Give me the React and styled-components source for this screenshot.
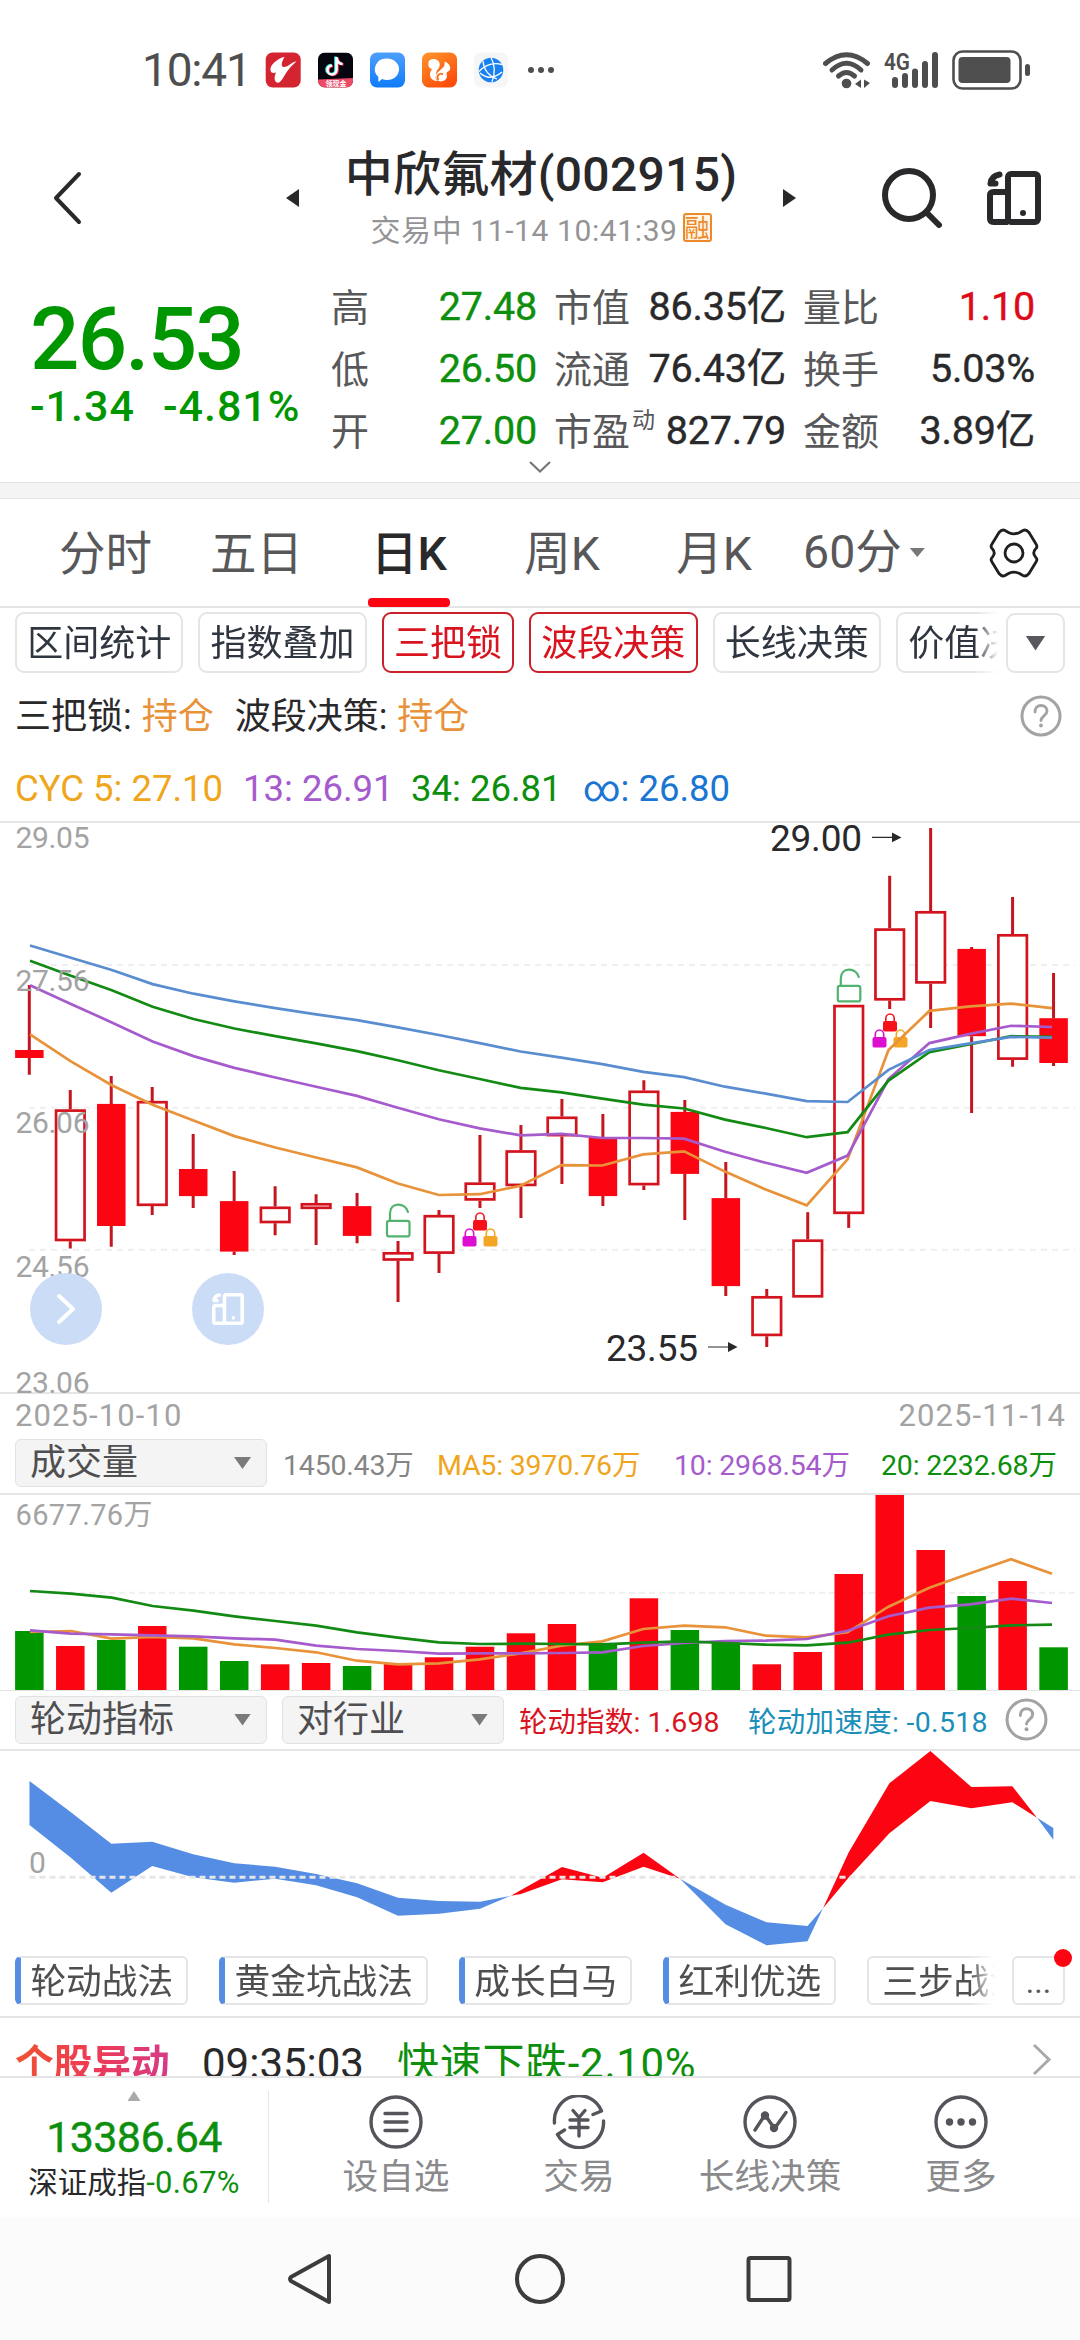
import React from 'react';
import styled, { createGlobalStyle, css } from 'styled-components';

const colors = {
  red: '#fa0511',
  wick: '#c4161f',
  green: '#009600',
  greenText: '#0d8f0d',
  orange: '#e8923a',
  gold: '#efa51c',
  purple: '#a65bcd',
  lineGreen: '#138a13',
  blue: '#5a8dd0',
  area: '#548de3',
  ink: '#29292b',
  label: '#58585a',
  muted: '#a3a3a3',
  border: '#e5e5e5',
};

// ---- chart data -------------------------------------------------------

// [high, body top, body bottom, low, filled]
const candles = [
  [984.9, 1050, 1058, 1074.8, 1],
  [1090.1, 1109.3, 1241.3, 1248.6, 0],
  [1076, 1103.9, 1226, 1246.7, 1],
  [1087, 1100.9, 1206.1, 1214.9, 0],
  [1134.1, 1169, 1196.1, 1208, 1],
  [1170.9, 1201.1, 1251.6, 1255, 1],
  [1186.2, 1206.5, 1223.3, 1235.2, 0],
  [1194.2, 1203, 1209.1, 1245.1, 0],
  [1193.1, 1206.1, 1235.9, 1243.2, 1],
  [1240.9, 1252, 1260.8, 1302.1, 0],
  [1209.9, 1214.9, 1253.9, 1273, 0],
  [1134.9, 1182.4, 1200.7, 1208, 0],
  [1125, 1150.2, 1186.2, 1218, 0],
  [1098.9, 1116.5, 1136.4, 1183.9, 0],
  [1113.9, 1137.6, 1196.1, 1206.1, 1],
  [1080.2, 1090.5, 1185.4, 1190, 0],
  [1100, 1111.9, 1173.9, 1219.9, 1],
  [1162.1, 1198.1, 1286.1, 1296, 1],
  [1289.1, 1296, 1336.2, 1346.9, 0],
  [1212.2, 1239.4, 1297.6, 1297.6, 0],
  [1004.8, 1004.8, 1214.1, 1227.9, 0],
  [875.8, 928.3, 1000.6, 1009, 0],
  [828, 911, 983.7, 1028.1, 0],
  [947, 948.9, 1036.2, 1113.1, 1],
  [896.9, 934, 1059.9, 1066.8, 0],
  [973, 1018.2, 1063, 1066, 1],
];

const cycLines = [
  {
    color: colors.orange,
    values: [1034.3, 1061.4, 1085.2, 1104.7, 1120.4, 1136.1, 1147.5, 1157.5, 1167.4, 1183.5, 1195, 1194.2, 1185.8, 1165.1, 1165.5, 1154.4, 1151.4, 1171.6, 1189.6, 1205.3, 1159.4, 1050, 1010.9, 1006.3, 1003.6, 1008.2],
  },
  {
    color: colors.purple,
    values: [985.3, 1004, 1022.4, 1041.5, 1056.1, 1067.9, 1077.5, 1086.7, 1095.9, 1107.7, 1119.2, 1128.4, 1135.3, 1133.8, 1138, 1138, 1138.7, 1151.8, 1162.8, 1172.8, 1155.6, 1079, 1043.1, 1033.9, 1025.8, 1027],
  },
  {
    color: colors.lineGreen,
    values: [960.8, 975.7, 990.3, 1006.7, 1019, 1028.5, 1036.2, 1043.4, 1051.1, 1060.3, 1070.2, 1079, 1087.8, 1092.4, 1098.6, 1104.7, 1108.5, 1119.6, 1128, 1137.2, 1132.2, 1080.6, 1052.2, 1044.2, 1036.2, 1036.9],
  },
  {
    color: colors.blue,
    values: [945.5, 957.7, 970, 984.1, 993.7, 1001.4, 1008.2, 1014.4, 1020.1, 1027.4, 1035, 1043.1, 1051.5, 1057.6, 1064.1, 1071.8, 1077.1, 1086.7, 1093.6, 1101.2, 1102, 1069.9, 1050, 1043.4, 1036.9, 1037.7],
  },
];

// positive = up day (red), negative = down day (green)
const volumes = [-59, 44, -50, 64, -43.3, -29, 25.7, 27, -24, 26.7, 32.7, 43.3, 56.7, 66, -45.7, 91.7, -60, -47.7, 25.7, 38, 116, 195, 140, -94, 109, -42.7];

const volumeLines = [
  {
    color: colors.orange,
    values: [1632, 1631, 1638.7, 1637, 1638.3, 1644.3, 1648, 1652.3, 1660.7, 1664.3, 1663.3, 1659.3, 1653.3, 1645.7, 1641.3, 1629, 1625.7, 1627.3, 1635.7, 1637.3, 1632.3, 1606.7, 1587.7, 1573.3, 1559.3, 1573.7],
  },
  {
    color: colors.purple,
    values: [1630.3, 1633.7, 1634.3, 1635.3, 1636.3, 1638.3, 1639.7, 1645.7, 1649, 1651, 1653.7, 1653.3, 1653.3, 1653, 1652.3, 1646, 1643, 1641, 1640.7, 1639, 1630.7, 1616.3, 1607.7, 1604.3, 1598.7, 1603],
  },
  {
    color: colors.lineGreen,
    values: [1591, 1593.7, 1597.7, 1606, 1610.7, 1616.3, 1621, 1625.7, 1632.3, 1637.7, 1642.3, 1644, 1643.7, 1644, 1644.3, 1642.7, 1641.3, 1643, 1644.7, 1645.3, 1642.7, 1634.7, 1630, 1628, 1625.3, 1624.7],
  },
];

const rotationAreas = [
  { color: colors.area, points: '29.5,1781 70.3,1811.7 111.3,1843.7 152.2,1841.7 193.2,1854.3 234.2,1863.3 275.1,1866.7 316.1,1874 357.1,1883.3 398,1897.7 439,1901 480,1901.7 511,1895.7 480,1908.7 439,1913.7 398,1915.7 357.1,1897.3 316.1,1885.3 275.1,1878.7 234.2,1882.7 193.2,1877.3 152.2,1866 111.3,1892.7 70.3,1857.3 29.5,1825' },
  { color: colors.red, points: '511,1895.7 521,1890 562,1867 602.7,1877.7 643.6,1852.7 680,1878.7 643.6,1866.7 602.7,1882.3 562,1879.3 521,1894' },
  { color: colors.area, points: '680,1878.7 725.5,1904.7 766.5,1922.3 807.5,1926 823,1908.3 807.5,1941.3 766.5,1945.3 725.5,1924.3' },
  { color: colors.red, points: '823,1908.3 848.5,1852.7 889.4,1783.3 930.4,1751 971.4,1787 1012.3,1786.3 1037,1817.7 1012.3,1802.3 971.4,1808.3 930.4,1801 889.4,1833.3 848.5,1877.7' },
  { color: colors.area, points: '1037,1817.7 1053.3,1828 1053.3,1839.7' },
];

const candleX = (i) => 29.3 + i * 40.97;
const toPoints = (values) => values.map((y, i) => `${(30 + i * 40.88).toFixed(1)},${y}`).join(' ');

// ---- icons ------------------------------------------------------------

const SplitScreenIcon = ({ size, color }) => (
  <svg width={size} height={size} viewBox="0 0 54 54" fill="none" stroke={color} strokeWidth="6">
    <rect x="21" y="3" width="30" height="48" rx="3" />
    <path d="M21 21H6.500Q3 21 3 24.500V47.500Q3 51 6.500 51H21" />
    <circle cx="36" cy="42" r="3" fill={color} stroke="none" />
    <path d="M12.500 3.500C7 4.500 4 8 3.500 12.500H8.500" strokeLinecap="round" strokeLinejoin="round" />
  </svg>
);

const HelpIcon = ({ size = 42 }) => (
  <svg width={size} height={size} viewBox="0 0 42 42">
    <circle cx="21" cy="21" r="19" fill="none" stroke="#a3a3a3" strokeWidth="3" />
    <path d="M15 17c0-4 2.500-6.500 6-6.500s6 2.300 6 5.600c0 4.500-6 5-6 9.400" fill="none" stroke="#a3a3a3" strokeWidth="2.900" strokeLinecap="round" />
    <circle cx="21" cy="30.500" r="1.900" fill="#a3a3a3" />
  </svg>
);

const OpenLock = ({ x, y }) => (
  <g transform={`translate(${x} ${y})`} fill="none" stroke="#52b36e" strokeWidth="2.200">
    <rect x="1" y="17.500" width="22.500" height="15.500" rx="2" />
    <path d="M4 17.500V10C4 -1.500 19.500 -1.500 22 8.500" strokeLinecap="round" />
  </g>
);

const SmallLock = ({ x, y, color }) => (
  <g transform={`translate(${x} ${y})`}>
    <path d="M2.800 9V5.500a4.200 4.500 0 0 1 8.400 0V9" fill="none" stroke={color} strokeWidth="1.600" />
    <rect y="8" width="14" height="10.500" rx="2" fill={color} />
  </g>
);

const LockGroup = ({ x, y }) => (
  <g transform={`translate(${x} ${y})`}>
    <SmallLock x={10.5} y={0} color="#f5121b" />
    <SmallLock x={0} y={16} color="#dc0fd0" />
    <SmallLock x={21} y={16} color="#f5a524" />
  </g>
);

const StatusIcons = () => (
  <svg width="208" height="44" viewBox="823 47 208 44">
    <g fill="none" stroke="#4e4e4e" strokeWidth="5" strokeLinecap="round">
      <path d="M825.500 62.500Q846.500 45 867.500 62.500" />
      <path d="M832 69Q846.500 55.500 861 69" />
      <path d="M838.500 75Q846.500 68 854.500 75" />
    </g>
    <circle cx="846.500" cy="82.500" r="4.800" fill="#4e4e4e" />
    <path d="M861 78.500V87L855 83zM864 78.500V87L870 82z" fill="#4e4e4e" />
    <text x="884" y="69" fontSize="24" fontWeight="600" fill="#4e4e4e" textLength="26" lengthAdjust="spacingAndGlyphs">4G</text>
    <g stroke="#4e4e4e" strokeWidth="6" strokeLinecap="round">
      <path d="M895 79V84M905 75V84M915 70.500V84M925 63V84M935 54V84" />
    </g>
    <rect x="953.500" y="50.500" width="67" height="37" rx="9" fill="none" stroke="#4e4e4e" strokeWidth="2.600" />
    <rect x="958.500" y="56" width="52" height="26" rx="4" fill="#4e4e4e" />
    <rect x="1025" y="63" width="5" height="12" rx="2.500" fill="#4e4e4e" />
  </svg>
);

const NotificationIcons = () => (
  <svg width="290" height="38" viewBox="265 51 290 38">
    <defs>
      <linearGradient id="msg" x1="0" y1="0" x2="0" y2="1">
        <stop offset="0" stopColor="#4da0fb" />
        <stop offset="1" stopColor="#0f7bfa" />
      </linearGradient>
      <linearGradient id="uc" x1="0" y1="0" x2="0.600" y2="1">
        <stop offset="0" stopColor="#ff962b" />
        <stop offset="1" stopColor="#fb4e0b" />
      </linearGradient>
      <clipPath id="tik">
        <rect x="318" y="52.500" width="35" height="35" rx="7" />
      </clipPath>
    </defs>
    <rect x="265.700" y="52.500" width="35" height="35" rx="7" fill="#d4242f" />
    <path d="M284.500 56.700C276 59 269.500 66 270.500 70C271 74 274.500 73 276 72.500C273.500 78 274.500 82.500 278 82.800C283 82.500 283.500 72 296.500 61.500C291 62 288 67.500 283.500 67C280 66 282.500 60.500 284.500 56.700z" fill="#fff" />
    <g clipPath="url(#tik)">
      <rect x="318" y="52.500" width="35" height="35" fill="#05050f" />
      <g fill="none" strokeWidth="2.600">
        <path d="M335.500 56.500V69.500a4.500 4.500 0 1 1-4.500-4.500M335.500 57.500q1 5.500 6 6" stroke="#25f4ee" />
        <path d="M337.500 57.500V70.500a4.500 4.500 0 1 1-4.500-4.500M337.500 58.500q1 5.500 6 6" stroke="#fe2c55" />
        <path d="M336.500 57V70a4.500 4.500 0 1 1-4.500-4.500M336.500 58q1 5.500 6 6" stroke="#fff" />
      </g>
      <path d="M318 79.500L353 78V88H318z" fill="#ed4a67" />
      <text x="325.500" y="86.300" fontSize="7" fontWeight="700" fill="#fff">领现金</text>
    </g>
    <rect x="370" y="52.500" width="35" height="35" rx="7" fill="url(#msg)" />
    <path d="M387 58.500a12 10.800 0 1 1-5 20.600L378.500 82L378.300 77A11.500 10.800 0 0 1 387 58.500z" fill="#fff" />
    <rect x="422" y="52.500" width="35" height="35" rx="7" fill="url(#uc)" />
    <path d="M428.500 63.500C428 60 431.500 58.500 434.500 59C440 60 441 65 438.500 68.500C436 71 436.500 73 436 76C435 78.500 436.500 80.500 438 81C431 81.500 427 75 432.500 68.500C431.500 69.500 427.500 67.500 428.500 63.500z" fill="#fff" />
    <path d="M436 76C437 72 441 69.500 443.500 67C445 65.500 444.500 63 444.500 61.500C449.500 63 451.500 68 449.500 70.500C447 72 446.500 72.500 446.500 74C448 77.500 445.500 81.500 440.500 81.500C437 81 435.500 79 436 76z" fill="#fff" />
    <path d="M438.500 80C435.500 76 440 72 443 74.500" fill="none" stroke="#fd6f1a" strokeWidth="1.800" />
    <rect x="474" y="52.500" width="34" height="35" rx="7" fill="#f6f6f7" />
    <circle cx="491" cy="70" r="12.300" fill="#1a82f0" />
    <path d="M479 71.500Q489 61 502 64.500M480 73Q490 82 502 72M491 57.500Q497 68 492 82" fill="none" stroke="#fff" strokeWidth="1.300" />
    <path d="M483 61Q484 74 497 79" fill="none" stroke="#fff" strokeWidth="1.300" />
    <g fill="#4e4e4e">
      <circle cx="531" cy="70" r="3" />
      <circle cx="541" cy="70" r="3" />
      <circle cx="551" cy="70" r="3" />
    </g>
  </svg>
);

// ---- charts -----------------------------------------------------------

const PriceChart = () => (
  <ChartSvg height="571" viewBox="0 823 1080 571">
    <path d="M29 965H1075M29 1107.700H1075M29 1249.700H1075" stroke="#efefef" strokeWidth="2" strokeDasharray="6 5" />
    {candles.map(([high, top, bottom, low, filled], i) => {
      const x = candleX(i);
      return (
        <g key={i}>
          <path d={`M${x} ${high}V${top}M${x} ${bottom}V${low}`} stroke={colors.wick} strokeWidth="3" />
          {filled ? (
            <rect x={x - 14.2} y={top} width="28.500" height={bottom - top} fill={colors.red} />
          ) : (
            <rect x={x - 14.2} y={top + 1.3} width="28.500" height={bottom - top - 2.6} fill="#fff" stroke="#d3141e" strokeWidth="2.700" />
          )}
        </g>
      );
    })}
    <LockGroup x={462.5} y={1212} />
    <LockGroup x={872.5} y={1013} />
    <OpenLock x={386} y={1203.4} />
    <OpenLock x={836.8} y={968.4} />
    {cycLines.map((line) => (
      <polyline key={line.color} points={toPoints(line.values)} fill="none" stroke={line.color} strokeWidth="2.700" />
    ))}
    <g fontSize="30" fill={colors.muted}>
      <text x="15.500" y="848" textLength="74">29.05</text>
      <text x="15.500" y="991" textLength="74">27.56</text>
      <text x="15.500" y="1133" textLength="74">26.06</text>
      <text x="15.500" y="1276.500" textLength="74">24.56</text>
      <text x="15.500" y="1393" textLength="74">23.06</text>
    </g>
    <g fontSize="37" fill={colors.ink}>
      <text x="770" y="851" textLength="92">29.00</text>
      <text x="606" y="1361" textLength="92">23.55</text>
    </g>
    <g stroke={colors.ink} fill={colors.ink}>
      <path d="M872 837.400H894M708 1347H730" strokeWidth="1.200" />
      <path d="M892 832.500L901.500 837.400L892 842.300zM728 1342L737.500 1347L728 1352z" stroke="none" />
    </g>
  </ChartSvg>
);

const VolumeChart = () => (
  <ChartSvg height="195" viewBox="0 1495 1080 195">
    <path d="M29 1592.700H1075" stroke="#efefef" strokeWidth="2" strokeDasharray="6 4" />
    {volumes.map((v, i) => (
      <rect key={i} x={candleX(i) - 14.2} y={1690 - Math.abs(v)} width="28.500" height={Math.abs(v)} fill={v > 0 ? colors.red : colors.green} />
    ))}
    {volumeLines.map((line) => (
      <polyline key={line.color} points={toPoints(line.values)} fill="none" stroke={line.color} strokeWidth="2.700" />
    ))}
    <text x="15.500" y="1524.500" fontSize="29" fill={colors.muted} textLength="137">6677.76万</text>
  </ChartSvg>
);

const RotationChart = () => (
  <ChartSvg height="195" viewBox="0 1751 1080 195">
    {rotationAreas.map((area) => (
      <polygon key={area.points} points={area.points} fill={area.color} />
    ))}
    <path d="M29.500 1877.300H1080" stroke="#e6e6e6" strokeWidth="3" strokeDasharray="6 4" />
    <text x="29" y="1873" fontSize="30" fill={colors.muted}>0</text>
  </ChartSvg>
);

// ---- page -------------------------------------------------------------

const quoteRows = [
  ['高', '27.48', '市值', '86.35亿', '量比', '1.10'],
  ['低', '26.50', '流通', '76.43亿', '换手', '5.03%'],
  ['开', '27.00', '市盈', '827.79', '金额', '3.89亿'],
];

const chips = [
  { text: '区间统计' },
  { text: '指数叠加' },
  { text: '三把锁', active: true },
  { text: '波段决策', active: true },
  { text: '长线决策' },
  { text: '价值决策' },
];

const strategies = ['轮动战法', '黄金坑战法', '成长白马', '红利优选'];

const App = () => {
  return (
    <Page>
      <GlobalStyle />

      <StatusBar>
        <Clock>10:41</Clock>
        <NotificationIcons />
        <Spacer />
        <StatusIcons />
      </StatusBar>

      <Header>
        <svg width="30" height="54" viewBox="0 0 30 54" fill="none" stroke={colors.ink} strokeWidth="4" strokeLinecap="round" strokeLinejoin="round">
          <path d="M27 3L4 27L27 51" />
        </svg>
        <Switcher>
          <Caret $dir="left" />
          <TitleBlock>
            <Title>中欣氟材(002915)</Title>
            <Subtitle>
              交易中 11-14 10:41:39<MarginBadge>融</MarginBadge>
            </Subtitle>
          </TitleBlock>
          <Caret $dir="right" />
        </Switcher>
        <HeaderTools>
          <svg width="62" height="62" viewBox="0 0 62 62" fill="none" stroke={colors.ink} strokeWidth="6" strokeLinecap="round">
            <circle cx="28" cy="28" r="24" />
            <path d="M45.500 45.500L58 58" />
          </svg>
          <SplitScreenIcon size={54} color={colors.ink} />
        </HeaderTools>
      </Header>

      <Quote>
        <PriceBlock>
          <Price>26.53</Price>
          <Change>
            <span>-1.34</span>
            <span>-4.81%</span>
          </Change>
        </PriceBlock>
        <Metrics>
          {quoteRows.map((row, i) => (
            <React.Fragment key={row[0]}>
              <Metric>
                <MetricLabel>{row[0]}</MetricLabel>
                <MetricValue $color={colors.greenText}>{row[1]}</MetricValue>
              </Metric>
              <Metric>
                <MetricLabel>
                  {row[2]}
                  {i === 2 && <Sup>动</Sup>}
                </MetricLabel>
                <MetricValue>{row[3]}</MetricValue>
              </Metric>
              <Metric>
                <MetricLabel>{row[4]}</MetricLabel>
                <MetricValue $color={i === 0 ? '#de0a17' : undefined}>{row[5]}</MetricValue>
              </Metric>
            </React.Fragment>
          ))}
        </Metrics>
      </Quote>
      <ExpandRow>
        <svg width="24" height="14" viewBox="0 0 24 14" fill="none" stroke="#777" strokeWidth="2.200">
          <path d="M2 2L12 11.500L22 2" />
        </svg>
      </ExpandRow>
      <Band />

      <Tabs>
        <Tab $width={151}>分时</Tab>
        <Tab $width={151}>五日</Tab>
        <Tab $width={154} $active>日K</Tab>
        <Tab $width={152}>周K</Tab>
        <Tab $width={152}>月K</Tab>
        <PeriodTab>
          60分
          <Triangle $w={15} $h={9} $color="#777" />
        </PeriodTab>
        <svg width="52" height="50" viewBox="-26 -25 52 50" fill="none" stroke="#1f1f21" strokeWidth="2.800" strokeLinejoin="round">
          <path d="M-15 -20.500Q-12 -24 -9 -22.500L-5 -20.300Q0 -18 5 -20.300L9 -22.500Q12 -24 15 -20.500L22 -9Q24 -6 21.500 -4Q18 0 21.500 4Q24 6 22 9L15 20.500Q12 24 9 22.500L5 20.300Q0 18 -5 20.300L-9 22.500Q-12 24 -15 20.500L-22 9Q-24 6 -21.500 4Q-18 0 -21.500 -4Q-24 -6 -22 -9z" />
          <circle r="9" />
        </svg>
      </Tabs>

      <ChipRow>
        <ChipScroller>
          {chips.map((chip) => (
            <Chip key={chip.text} $active={chip.active}>{chip.text}</Chip>
          ))}
        </ChipScroller>
        <ChipMore>
          <Triangle $w={20} $h={15} $color="#58595e" />
        </ChipMore>
      </ChipRow>

      <SignalRow>
        <Signal>
          三把锁: <em>持仓</em>
        </Signal>
        <Signal>
          波段决策: <em>持仓</em>
        </Signal>
        <Spacer />
        <HelpIcon />
      </SignalRow>

      <CycRow>
        <Cyc $color={colors.gold} $width={228}>CYC 5: 27.10</Cyc>
        <Cyc $color={colors.purple} $width={168}>13: 26.91</Cyc>
        <Cyc $color={colors.greenText} $width={172}>34: 26.81</Cyc>
        <Cyc $color="#1a76d2">∞: 26.80</Cyc>
      </CycRow>

      <PricePanel>
        <PriceChart />
        <FloatButton $left={30}>
          <svg width="20" height="32" viewBox="0 0 20 32" fill="none" stroke="#fff" strokeWidth="4" strokeLinecap="round" strokeLinejoin="round">
            <path d="M3 3L17 16L3 29" />
          </svg>
        </FloatButton>
        <FloatButton $left={192}>
          <SplitScreenIcon size={32} color="#fff" />
        </FloatButton>
      </PricePanel>

      <DateRow>
        <span>2025-10-10</span>
        <span>2025-11-14</span>
      </DateRow>

      <IndicatorRow>
        <Select $width={252}>
          成交量
          <Triangle $w={17} $h={12} $color="#7a7a7c" />
        </Select>
        <Reading $color="#858585" $left={16} $width={154}>1450.43万</Reading>
        <Reading $color={colors.gold} $width={237}>MA5: 3970.76万</Reading>
        <Reading $color={colors.purple} $width={207}>10: 2968.54万</Reading>
        <Reading $color={colors.greenText}>20: 2232.68万</Reading>
      </IndicatorRow>
      <VolumeChart />
      <IndicatorRow $divided>
        <Select $width={252}>
          轮动指标
          <Triangle $w={17} $h={12} $color="#7a7a7c" />
        </Select>
        <Select $width={222} $left={15}>
          对行业
          <Triangle $w={17} $h={12} $color="#7a7a7c" />
        </Select>
        <Reading $color="#d9141f" $left={15} $width={229} $spacing={0.1}>轮动指数: 1.698</Reading>
        <Reading $color="#1b8fb9" $width={257} $spacing={0.3}>轮动加速度: -0.518</Reading>
        <HelpIcon size={43} />
      </IndicatorRow>
      <RotationChart />

      <StrategyRow>
        <StrategyScroller>
          {strategies.map((name) => (
            <Strategy key={name} $marked>{name}</Strategy>
          ))}
          <Strategy>三步战法</Strategy>
        </StrategyScroller>
        <StrategyMore>...</StrategyMore>
      </StrategyRow>

      <AlertRow>
        <AlertTag>个股异动</AlertTag>
        <AlertTime>09:35:03</AlertTime>
        <AlertText>快速下跌-2.10%</AlertText>
        <Spacer />
        <svg width="20" height="36" viewBox="0 0 20 36" fill="none" stroke="#aaa" strokeWidth="3">
          <path d="M2 3L17 17.500L2 32" />
        </svg>
      </AlertRow>

      <BottomBar>
        <IndexBlock>
          <Triangle $w={13} $h={10} $up $color="#aaa" />
          <IndexValue>13386.64</IndexValue>
          <IndexName>
            深证成指<b>-0.67%</b>
          </IndexName>
        </IndexBlock>
        <Actions>
          <Action>
            <ActionIcon viewBox="0 0 54 54">
              <circle cx="27" cy="27" r="25" />
              <path d="M16 18.500H38M16 27H38M16 35.500H38" />
            </ActionIcon>
            设自选
          </Action>
          <Action>
            <ActionIcon viewBox="0 0 54 54">
              <path d="M2.500 28A24.500 25 0 0 1 49.500 16L41 19.500M51.500 26A24.500 25 0 0 1 5.500 39.500L12.500 35" />
              <path d="M21 15.500L27 22.500L33 15.500M27 22.500V41M18 25H36M18 32.500H36" />
            </ActionIcon>
            交易
          </Action>
          <Action>
            <ActionIcon viewBox="0 0 54 54">
              <circle cx="27" cy="27" r="25" />
              <path d="M12 35L22 20L31.500 33.500L43 17.500" />
              <circle cx="22" cy="20.500" r="2.500" />
              <circle cx="31" cy="33" r="2.500" />
            </ActionIcon>
            长线决策
          </Action>
          <Action>
            <ActionIcon viewBox="0 0 54 54">
              <circle cx="27" cy="27" r="25" />
              <g fill="#54545b" stroke="none">
                <circle cx="15.500" cy="27" r="3.700" />
                <circle cx="27" cy="27" r="3.700" />
                <circle cx="38.500" cy="27" r="3.700" />
              </g>
            </ActionIcon>
            更多
          </Action>
        </Actions>
      </BottomBar>

      <NavBar>
        <svg width="46" height="54" viewBox="0 0 46 54">
          <path d="M42 4V50L4 29Q2 27 4 25z" />
        </svg>
        <svg width="54" height="54" viewBox="0 0 54 54">
          <circle cx="27" cy="27" r="23" />
        </svg>
        <svg width="46" height="54" viewBox="0 0 46 54">
          <rect x="2.500" y="6" width="41" height="42" rx="2" />
        </svg>
      </NavBar>
    </Page>
  );
};

// Styled components
const GlobalStyle = createGlobalStyle`
  * {
    box-sizing: border-box;
  }

  body {
    margin: 0;
    background: #fff;
  }

  svg {
    display: block;
    flex-shrink: 0;
  }
`;

const Page = styled.div`
  display: flex;
  flex-direction: column;
  width: 1080px;
  height: 2340px;
  overflow: hidden;
  background: #fff;
  color: ${colors.ink};
  font-family: Roboto, 'Noto Sans CJK SC', sans-serif;
  white-space: nowrap;

  > * {
    flex-shrink: 0;
  }
`;

const Spacer = styled.div`
  flex: 1;
`;

const StatusBar = styled.div`
  display: flex;
  align-items: center;
  height: 139px;
  padding: 0 49px 0 142px;
`;

const Clock = styled.div`
  width: 123px;
  font-size: 46px;
  letter-spacing: -1.2px;
  color: #4e4e4e;
`;

const Header = styled.div`
  display: flex;
  align-items: center;
  height: 117px;
  padding: 0 39px 0 52px;
`;

const Switcher = styled.div`
  display: flex;
  align-items: center;
  justify-content: space-between;
  width: 510px;
  margin-left: 204px;
`;

const Caret = styled.div`
  border-top: 9px solid transparent;
  border-bottom: 9px solid transparent;
  ${({ $dir }) => ($dir === 'left' ? 'border-right' : 'border-left')}: 13px solid ${colors.ink};
`;

const TitleBlock = styled.div`
  display: flex;
  flex-direction: column;
  align-items: center;
`;

const Title = styled.div`
  height: 60px;
  line-height: 58px;
  font-size: 48px;
  font-weight: 500;
  letter-spacing: 0.3px;
`;

const Subtitle = styled.div`
  display: flex;
  align-items: center;
  height: 44px;
  font-size: 30px;
  letter-spacing: 0.6px;
  color: #949496;
`;

const MarginBadge = styled.span`
  width: 29px;
  height: 29px;
  margin-left: 5px;
  border: 2px solid #ec8a2b;
  border-radius: 3px;
  line-height: 27px;
  font-size: 25px;
  letter-spacing: 0;
  color: #ec8a2b;
  background: #fff4e6;
`;

const HeaderTools = styled.div`
  display: flex;
  align-items: center;
  gap: 44px;
  margin-left: auto;
`;

const Quote = styled.div`
  display: flex;
  height: 202px;
  padding: 0 45px 0 30px;
`;

const PriceBlock = styled.div`
  width: 301px;
  padding-top: 36px;
  color: ${colors.green};
`;

const Price = styled.div`
  height: 94px;
  line-height: 94px;
  font-size: 87px;
  font-weight: 500;
  letter-spacing: -1.8px;
`;

const Change = styled.div`
  display: flex;
  gap: 28px;
  height: 50px;
  line-height: 40px;
  font-size: 43px;
  font-weight: 500;
  letter-spacing: 1px;
`;

const Metrics = styled.div`
  display: grid;
  grid-template-columns: 206px 232px 232px;
  grid-auto-rows: 62px;
  column-gap: 17px;
  padding-top: 20px;
`;

const Metric = styled.div`
  display: flex;
  justify-content: space-between;
  align-items: center;
  line-height: 62px;
`;

const MetricLabel = styled.span`
  display: flex;
  padding-top: 2px;
  font-size: 38px;
  color: ${colors.label};
`;

const Sup = styled.span`
  margin-left: 2px;
  line-height: 40px;
  font-size: 23px;
`;

const MetricValue = styled.span`
  font-size: 39.500px;
  letter-spacing: -0.2px;
  -webkit-text-stroke: 0.4px currentColor;
  color: ${({ $color }) => $color || colors.ink};
`;

const ExpandRow = styled.div`
  display: flex;
  justify-content: center;
  height: 24px;
  padding-top: 2px;
`;

const Band = styled.div`
  height: 17px;
  background: #f4f4f4;
  border-top: 1px solid ${colors.border};
  border-bottom: 1px solid ${colors.border};
`;

const Tabs = styled.div`
  display: flex;
  align-items: center;
  height: 109px;
  padding: 0 0 0 30px;
  border-bottom: 2px solid ${colors.border};
`;

const Tab = styled.div`
  position: relative;
  width: ${({ $width }) => $width}px;
  height: 108px;
  line-height: 111px;
  text-align: center;
  font-size: 46.500px;
  color: ${colors.label};

  ${({ $active }) =>
    $active &&
    css`
      font-weight: 500;
      color: ${colors.ink};

      &::after {
        content: '';
        position: absolute;
        left: 50%;
        bottom: 0;
        width: 82px;
        height: 9px;
        margin-left: -41px;
        border-radius: 4px;
        background: ${colors.red};
      }
    `}
`;

const PeriodTab = styled.div`
  display: flex;
  align-items: center;
  gap: 8px;
  width: 198px;
  padding-left: 13px;
  line-height: 111px;
  font-size: 46.500px;
  color: ${colors.label};
`;

const Triangle = styled.i`
  width: ${({ $w }) => $w}px;
  height: ${({ $h }) => $h}px;
  background: ${({ $color }) => $color};
  clip-path: ${({ $up }) => ($up ? 'polygon(50% 0, 100% 100%, 0 100%)' : 'polygon(0 0, 100% 0, 50% 100%)')};
`;

const ChipRow = styled.div`
  display: flex;
  height: 68px;
  padding: 4px 15px 0;
`;

const ChipScroller = styled.div`
  display: flex;
  gap: 15px;
  width: 983px;
  overflow: hidden;
  mask-image: linear-gradient(to right, #000 960px, transparent 983px);
`;

const Chip = styled.div`
  flex-shrink: 0;
  height: 61px;
  padding: 0 10.200px;
  border: 2px solid ${({ $active }) => ($active ? '#c9202a' : colors.border)};
  border-radius: 9px;
  line-height: 61px;
  font-size: 36px;
  color: ${({ $active }) => ($active ? '#d9141f' : '#303640')};
`;

const ChipMore = styled.div`
  display: flex;
  align-items: center;
  justify-content: center;
  width: 59px;
  height: 60px;
  margin: 1px 0 0 8px;
  border: 2px solid ${colors.border};
  border-radius: 9px;
`;

const SignalRow = styled.div`
  display: flex;
  align-items: center;
  gap: 21px;
  height: 79px;
  padding: 0 18px 0 15px;
`;

const Signal = styled.div`
  padding-bottom: 5px;
  font-size: 36px;

  em {
    margin-left: 1px;
    font-style: normal;
    color: ${colors.orange};
  }
`;

const CycRow = styled.div`
  display: flex;
  align-items: center;
  height: 68px;
  padding-left: 15px;
  border-bottom: 2px solid ${colors.border};
`;

const Cyc = styled.div`
  width: ${({ $width }) => ($width ? `${$width}px` : 'auto')};
  font-size: 36.500px;
  color: ${({ $color }) => $color};
`;

const PricePanel = styled.div`
  position: relative;
  height: 571px;
  border-bottom: 2px solid ${colors.border};
`;

const ChartSvg = styled.svg`
  width: 1080px;
  overflow: visible;
  font-family: Roboto, 'Noto Sans CJK SC', sans-serif;
`;

const FloatButton = styled.button`
  position: absolute;
  left: ${({ $left }) => $left}px;
  top: 450px;
  display: flex;
  align-items: center;
  justify-content: center;
  width: 72px;
  height: 72px;
  padding: 0;
  border: 0;
  border-radius: 50%;
  background: #cbdcf6;
`;

const DateRow = styled.div`
  display: flex;
  justify-content: space-between;
  align-items: center;
  height: 40px;
  padding: 2px 14px 0 15px;
  font-size: 31px;
  letter-spacing: 1.1px;
  color: ${colors.muted};
`;

const IndicatorRow = styled.div`
  display: flex;
  align-items: center;
  height: 61px;
  padding: 0 15px 1px;
  border-bottom: 2px solid ${colors.border};
  ${({ $divided }) => $divided && `border-top: 1px solid ${colors.border};`}
`;

const Select = styled.div`
  display: flex;
  align-items: center;
  justify-content: space-between;
  width: ${({ $width }) => $width}px;
  height: 48px;
  margin-left: ${({ $left }) => $left || 0}px;
  padding: 0 15px 0 14px;
  border: 1px solid #e2e2e2;
  border-radius: 6px;
  background: #f4f4f4;
  line-height: 50px;
  font-size: 36px;
  color: #4f4f51;
`;

const Reading = styled.div`
  width: ${({ $width }) => ($width ? `${$width}px` : 'auto')};
  margin-left: ${({ $left }) => $left || 0}px;
  padding-bottom: 1px;
  font-size: 28.500px;
  letter-spacing: ${({ $spacing }) => $spacing || -0.2}px;
  color: ${({ $color }) => $color};
`;

const StrategyRow = styled.div`
  display: flex;
  height: 72px;
  padding: 10px 15px 0;
  border-bottom: 2px solid ${colors.border};
`;

const StrategyScroller = styled.div`
  display: flex;
  gap: 31px;
  width: 980px;
  overflow: hidden;
  mask-image: linear-gradient(to right, #000 955px, transparent 980px);
`;

const Strategy = styled.div`
  flex-shrink: 0;
  height: 49px;
  padding: 0 13px 0 ${({ $marked }) => ($marked ? 9.4 : 13)}px;
  border: 2px solid ${colors.border};
  border-radius: 6px;
  line-height: 48px;
  font-size: 35.700px;
  color: #4f4f51;
  ${({ $marked }) => $marked && `border-left: 6px solid ${colors.area};`}
`;

const StrategyMore = styled.div`
  position: relative;
  width: 53px;
  height: 49px;
  margin-left: 17px;
  border: 2px solid ${colors.border};
  border-radius: 6px;
  line-height: 48px;
  text-align: center;
  font-size: 32px;
  color: ${colors.label};

  &::after {
    content: '';
    position: absolute;
    right: -9px;
    top: -9px;
    width: 18px;
    height: 18px;
    border-radius: 50%;
    background: ${colors.red};
  }
`;

const AlertRow = styled.div`
  display: flex;
  align-items: flex-start;
  height: 58px;
  padding: 24px 28px 0 15px;
  overflow: hidden;
  line-height: 44px;
`;

const AlertTag = styled.div`
  width: 187px;
  font-size: 38.700px;
  font-weight: 700;
  background: linear-gradient(100deg, #f0532f 0, #ee3a55 80px, #d63a86 154px);
  background-clip: text;
  color: transparent;
`;

const AlertTime = styled.div`
  width: 195px;
  font-size: 42px;
`;

const AlertText = styled.div`
  font-size: 42px;
  letter-spacing: 0.7px;
  color: ${colors.greenText};
`;

const BottomBar = styled.div`
  display: flex;
  height: 142px;
  padding-top: 13px;
  border-top: 2px solid ${colors.border};
`;

const IndexBlock = styled.div`
  display: flex;
  flex-direction: column;
  align-items: center;
  width: 269px;
  height: 112px;
  border-right: 1px solid ${colors.border};
`;

const IndexValue = styled.div`
  margin-top: 11px;
  height: 50px;
  line-height: 50px;
  font-size: 43px;
  letter-spacing: -0.6px;
  -webkit-text-stroke: 0.4px currentColor;
  color: ${colors.greenText};
`;

const IndexName = styled.div`
  margin-top: 4px;
  line-height: 34px;
  font-size: 29.500px;

  b {
    font-weight: 400;
    font-size: 31px;
    letter-spacing: 0.3px;
    color: ${colors.greenText};
  }
`;

const Actions = styled.div`
  display: grid;
  grid-template-columns: 190px 176px 206px 176px;
  margin-left: 32px;
`;

const Action = styled.div`
  display: flex;
  flex-direction: column;
  align-items: center;
  padding-top: 4px;
  line-height: 57px;
  font-size: 35.700px;
  color: #8a8a8c;
`;

const ActionIcon = styled.svg`
  width: 54px;
  height: 54px;
  fill: none;
  stroke: #54545b;
  stroke-width: 3.4;
  stroke-linecap: round;
  stroke-linejoin: round;
`;

const NavBar = styled.div`
  display: flex;
  align-items: center;
  justify-content: space-between;
  flex: 1;
  padding: 0 288px 0 287px;
  background: #fbfbfb;

  svg {
    fill: none;
    stroke: #3c3c3c;
    stroke-width: 4;
    stroke-linejoin: round;
  }
`;

export default App;
